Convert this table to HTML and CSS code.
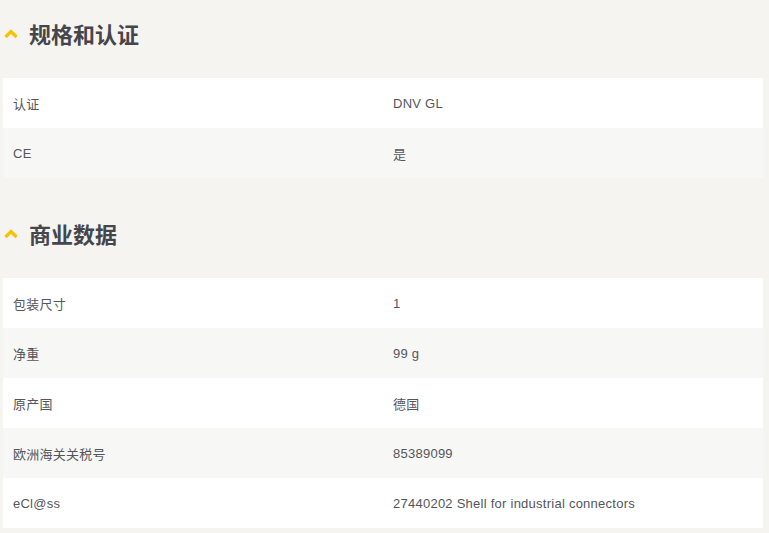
FILE: index.html
```html
<!DOCTYPE html>
<html lang="zh-CN">
<head>
<meta charset="utf-8">
<link rel="stylesheet" href="styles.css">
</head>
<body>
<section class="section">
  <h2 class="heading"><svg class="chev" width="14" height="11" viewBox="0 0 14 11"><path d="M1.5 9 L7 3.5 L12.5 9" fill="none" stroke="#f6c200" stroke-width="3.2"/></svg>规格和认证</h2>
  <div class="table">
    <div class="row"><div class="cell">认证</div><div class="cell">DNV GL</div></div>
    <div class="row"><div class="cell">CE</div><div class="cell">是</div></div>
  </div>
</section>
<section class="section">
  <h2 class="heading"><svg class="chev" width="14" height="11" viewBox="0 0 14 11"><path d="M1.5 9 L7 3.5 L12.5 9" fill="none" stroke="#f6c200" stroke-width="3.2"/></svg>商业数据</h2>
  <div class="table">
    <div class="row"><div class="cell">包装尺寸</div><div class="cell">1</div></div>
    <div class="row"><div class="cell">净重</div><div class="cell">99 g</div></div>
    <div class="row"><div class="cell">原产国</div><div class="cell">德国</div></div>
    <div class="row"><div class="cell">欧洲海关关税号</div><div class="cell">85389099</div></div>
    <div class="row"><div class="cell">eCl@ss</div><div class="cell">27440202 Shell for industrial connectors</div></div>
  </div>
</section>
</body>
</html>
```
FILE: styles.css
```css
html, body {
  margin: 0;
  padding: 0;
  background: #f5f4f0;
}
body {
  padding: 0 6px 0 3px;
  font-family: "Liberation Sans", "Noto Sans CJK SC", sans-serif;
  color: #4a4b50;
}
.section + .section {
  margin-top: 22px;
}
.heading {
  display: flex;
  align-items: center;
  gap: 11px;
  height: 66px;
  margin: 0 0 12px 0;
  padding-left: 1px;
  font-family: "Noto Sans CJK SC", sans-serif;
  font-size: 22px;
  font-weight: 700;
  color: #45464c;
}
.chev {
  flex: none;
  margin-top: 1px;
}
.table {
  display: flex;
  flex-direction: column;
}
.row {
  display: grid;
  grid-template-columns: 380px 1fr;
  height: 50px;
  align-items: center;
  background: #ffffff;
}
.row:nth-child(even) {
  background: #f7f7f5;
}
.cell {
  padding-left: 10px;
  font-size: 13px;
  letter-spacing: 0.25px;
  color: #55565b;
}
```
